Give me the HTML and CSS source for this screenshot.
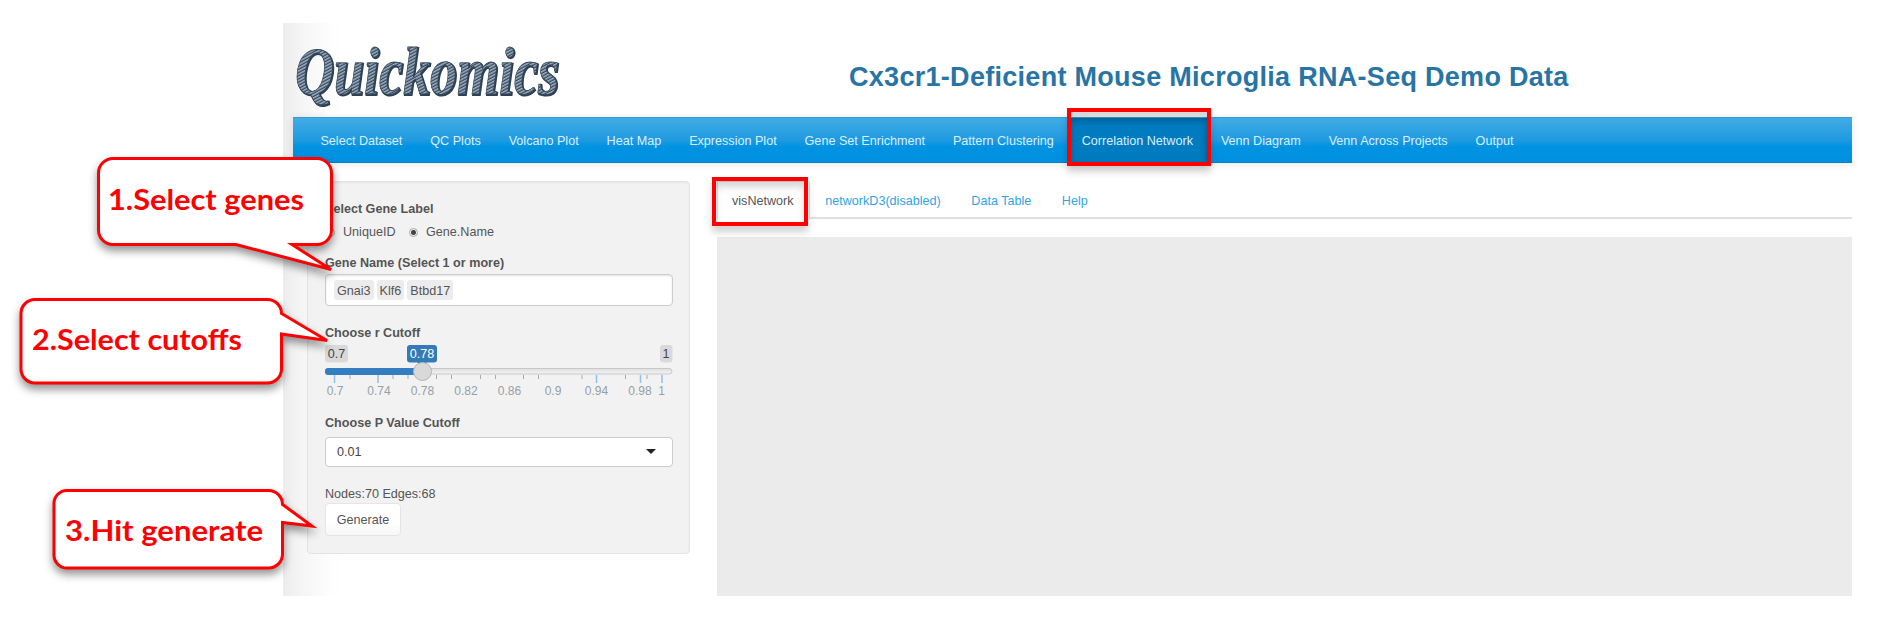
FILE: index.html
```html
<!DOCTYPE html>
<html lang="en">
<head>
<meta charset="utf-8">
<title>Quickomics</title>
<link rel="stylesheet" href="styles.css">
</head>
<body>
<div class="page">
  <header class="header">
    <svg class="logo" width="280" height="82" viewBox="0 0 280 82">
      <defs>
        <pattern id="rope" width="4" height="2.8" patternUnits="userSpaceOnUse" patternTransform="rotate(-28)">
          <rect width="4" height="2.8" fill="#35475a"/>
          <rect width="4" height="1.5" fill="#9fb0c3"/>
        </pattern>
      </defs>
      <text class="logo-text logo-shade" x="3" y="60" textLength="264" lengthAdjust="spacingAndGlyphs">Quickomics</text>
      <text class="logo-text logo-face" x="2" y="59" textLength="264" lengthAdjust="spacingAndGlyphs" aria-hidden="true">Quickomics</text>
    </svg>
    <h1 class="title">Cx3cr1-Deficient Mouse Microglia RNA-Seq Demo Data</h1>
  </header>
  <nav class="navbar">
    <a class="nav-item">Select Dataset</a>
    <a class="nav-item">QC Plots</a>
    <a class="nav-item">Volcano Plot</a>
    <a class="nav-item">Heat Map</a>
    <a class="nav-item">Expression Plot</a>
    <a class="nav-item">Gene Set Enrichment</a>
    <a class="nav-item">Pattern Clustering</a>
    <a class="nav-item active">Correlation Network</a>
    <a class="nav-item">Venn Diagram</a>
    <a class="nav-item">Venn Across Projects</a>
    <a class="nav-item">Output</a>
  </nav>
  <div class="content">
    <aside class="panel">
      <div class="label">Select Gene Label</div>
      <div class="radios">
        <span class="radio"></span><span class="radio-text first">UniqueID</span>
        <span class="radio checked"></span><span class="radio-text">Gene.Name</span>
      </div>
      <div class="label gene-label">Gene Name (Select 1 or more)</div>
      <div class="field genes"><span class="tag">Gnai3</span><span class="tag">Klf6</span><span class="tag">Btbd17</span></div>
      <div class="label cutoff-label">Choose r Cutoff</div>
      <svg class="slider" width="348" height="56" viewBox="0 0 348 56">
        <defs><linearGradient id="track" x1="0" y1="0" x2="0" y2="1"><stop offset="0" stop-color="#dedede"/><stop offset="1" stop-color="#f3f3f3"/></linearGradient></defs>
        <rect x="0" y="1" width="23" height="17.500" rx="3" fill="#d9d9d9"/>
        <rect x="335" y="1" width="12.500" height="17.500" rx="3" fill="#d9d9d9"/>
        <rect x="82" y="1" width="30" height="17.500" rx="3" fill="#337ab7"/>
        <path d="M92 18h10l-5 4z" fill="#337ab7"/>
        <text class="bubble" x="11.500" y="14">0.7</text>
        <text class="bubble" x="341" y="14">1</text>
        <text class="bubble current" x="97" y="14">0.78</text>
        <rect x=".5" y="24.500" width="346.500" height="5.500" rx="3" fill="url(#track)" stroke="#c8c8c8"/>
        <path d="M3 24h94v7H3a3 3 0 0 1-3-3v-1a3 3 0 0 1 3-3z" fill="#337ec0"/>
        <path class="tick-major" d="M9.500 31v8M53 31v8M271.500 31v8M315.500 31v8M337 31v8"/>
        <path class="tick-minor" d="M25 31v4M68 31v4M83 31v4M111.500 31v4M126.500 31v4M155.500 31v4M170.500 31v4M198.500 31v4M213.500 31v4M257 31v4M300.500 31v4M322 31v4"/>
        <circle cx="97.500" cy="27.500" r="9" fill="#d9d9d9" stroke="#b5b5b5"/>
        <g class="scale">
          <text x="10" y="51">0.7</text><text x="54" y="51">0.74</text><text x="97.500" y="51">0.78</text><text x="141" y="51">0.82</text><text x="184.500" y="51">0.86</text><text x="228" y="51">0.9</text><text x="271.500" y="51">0.94</text><text x="315" y="51">0.98</text><text x="336.500" y="51">1</text>
        </g>
      </svg>
      <div class="label p-label">Choose P Value Cutoff</div>
      <div class="field select"><span>0.01</span><span class="caret"></span></div>
      <div class="summary">Nodes:70 Edges:68</div>
      <button class="generate">Generate</button>
    </aside>
    <main class="main">
      <div class="tabs">
        <a class="tab current-tab">visNetwork</a>
        <a class="tab">networkD3(disabled)</a>
        <a class="tab">Data Table</a>
        <a class="tab">Help</a>
      </div>
      <div class="canvas"></div>
    </main>
  </div>
</div>
<div class="highlight nav-highlight"></div>
<div class="highlight tab-highlight"></div>
<svg class="callouts" width="420" height="632" viewBox="0 0 420 632">
  <path class="balloon" d="M113 158.500H317a14.500 14.500 0 0 1 14.500 14.500V230a14.500 14.500 0 0 1-14.500 14.500H292L331 269.500L236 244.500H113A14.500 14.500 0 0 1 98.500 230V173A14.500 14.500 0 0 1 113 158.500Z"/>
  <path class="balloon" d="M35 299.500H267.500a14 14 0 0 1 14 14L327 340.500L281.500 334V369a14 14 0 0 1-14 14H35A14 14 0 0 1 21 369V313.500A14 14 0 0 1 35 299.500Z"/>
  <path class="balloon" d="M67 490.500H268.500a14 14 0 0 1 14 14L312 526L282.500 522.500V554a14 14 0 0 1-14 14H67A13 13 0 0 1 54 555V503.500A13 13 0 0 1 67 490.500Z"/>
  <text class="note" x="108" y="210" textLength="196" lengthAdjust="spacingAndGlyphs">1.Select genes</text>
  <text class="note" x="32" y="350" textLength="210" lengthAdjust="spacingAndGlyphs">2.Select cutoffs</text>
  <text class="note" x="65" y="541" textLength="198" lengthAdjust="spacingAndGlyphs">3.Hit generate</text>
</svg>
</body>
</html>
```
FILE: styles.css
```css
* { box-sizing: border-box; }
body { margin: 0; padding-top: 23px; width: 1878px; height: 632px; overflow: hidden; background: #fff; font: 12.6px/18px "Liberation Sans", Arial, sans-serif; color: #555; position: relative; }
.page { margin: 0 0 0 283px; padding: 0 0 0 10px; width: 1569px; height: 573px; background: linear-gradient(90deg, #ececec 0, #f5f5f5 18px, #fdfdfd 45px, #fff 62px); }
.header { height: 94px; display: flex; align-items: flex-start; }
.logo { margin-top: 12px; flex: none; overflow: visible; }
.logo-text { font: italic bold 68px "Liberation Serif", serif; }
.logo-shade { fill: #2f4052; stroke: #2f4052; stroke-width: 2px; }
.logo-face { fill: url(#rope); stroke: #35475a; stroke-width: .8px; }
.title { margin: 38px 0 0 276px; font-size: 27px; line-height: 32px; letter-spacing: .29px; color: #2874a4; white-space: nowrap; }
.navbar { height: 46px; padding-left: 13.5px; display: flex; background: linear-gradient(#41ace6 0, #1f9ae0 50%, #0093e2 65%, #008fde 100%); border-top: 1px solid #369bd2; border-bottom: 1px solid #087ec3; box-shadow: 0 1px 8px rgba(0,0,0,.1); }
.nav-item { padding: 14px 13.970px 0; color: #d9effb; white-space: nowrap; }
.active { background: #007bc0; box-shadow: inset 0 3px 7px rgba(0,0,0,.18); }
.content { display: flex; padding: 18px 0 0 14px; align-items: flex-start; }
.panel { width: 383px; height: 373px; padding: 21px 17px 0; flex: none; background: #f2f2f2; border: 1px solid #e3e3e3; border-radius: 4px; box-shadow: inset 0 1px 2px rgba(0,0,0,.05); }
.label { height: 18px; font-weight: bold; line-height: 18px; margin-top: -3px; }
.radios { display: flex; align-items: center; height: 18px; margin-top: 5px; }
.radio { width: 9px; height: 9px; margin-left: 1px; border: 1px solid #aaa; border-radius: 50%; background: #eee; }
.checked { margin-left: 12px; background: radial-gradient(circle, #444 0 2px, #eee 3px); }
.radio-text { margin-left: 8px; }
.first { width: 54px; }
.gene-label { margin-top: 13px; }
.field { width: 348px; height: 32px; background: #fff; border: 1px solid #ccc; border-radius: 4px; }
.genes { display: flex; gap: 3px; padding: 5px 8px; margin-top: 2px; box-shadow: inset 0 1px 2px rgba(0,0,0,.12); }
.tag { height: 20px; line-height: 22px; padding: 0 3px; background: #ececec; border-radius: 3px; }
.cutoff-label { margin-top: 18px; }
.slider { display: block; margin-top: 2px; overflow: visible; }
.bubble { font-size: 12.6px; text-anchor: middle; fill: #444; }
.current { fill: #fff; }
.scale { font-size: 12px; text-anchor: middle; fill: #94a1a8; }
.tick-major { stroke: #8fc4ea; stroke-width: 1.5px; }
.tick-minor { stroke: #aaa; stroke-width: 1px; }
.p-label { margin-top: 14px; }
.select { height: 30px; margin-top: 5px; padding: 0 16px 1px 11px; display: flex; justify-content: space-between; align-items: center; color: #444; }
.caret { border: 5px solid transparent; border-top-color: #222; border-bottom: 0; }
.summary { margin-top: 18px; height: 18px; }
.generate { display: block; margin: 0; width: 76px; height: 33px; padding: 0; font: inherit; color: #555; background: linear-gradient(#fff 60%, #f7f7f7); border: 1px solid #e5e5e5; border-radius: 4px; }
.main { margin-left: 27px; flex: 1; }
.tabs { display: flex; height: 38px; border-bottom: 2px solid #e0e0e0; }
.tab { height: 38px; padding: 11px 15.300px 0; color: #2fa4e7; white-space: nowrap; }
.current-tab { padding-left: 14px; color: #555; background: #fff; border: 1px solid #ddd; border-bottom: 0; padding-top: 10px; }
.canvas { height: 359px; margin-top: 18px; background: #ebebeb; }
.highlight { position: absolute; border: 4px solid #f00; box-shadow: 0 6px 7px rgba(0,0,0,.18), inset 0 6px 7px rgba(0,0,0,.16); }
.nav-highlight { left: 1067px; top: 108px; width: 144px; height: 58px; }
.tab-highlight { left: 712px; top: 177px; width: 96px; height: 49px; }
.callouts { position: absolute; left: 0; top: 0; }
.balloon { fill: #fff; stroke: #f00; stroke-width: 3px; filter: drop-shadow(0 5px 4px rgba(0,0,0,.42)); }
.note { font: bold 28px Lato, sans-serif; fill: #f00; }
```
